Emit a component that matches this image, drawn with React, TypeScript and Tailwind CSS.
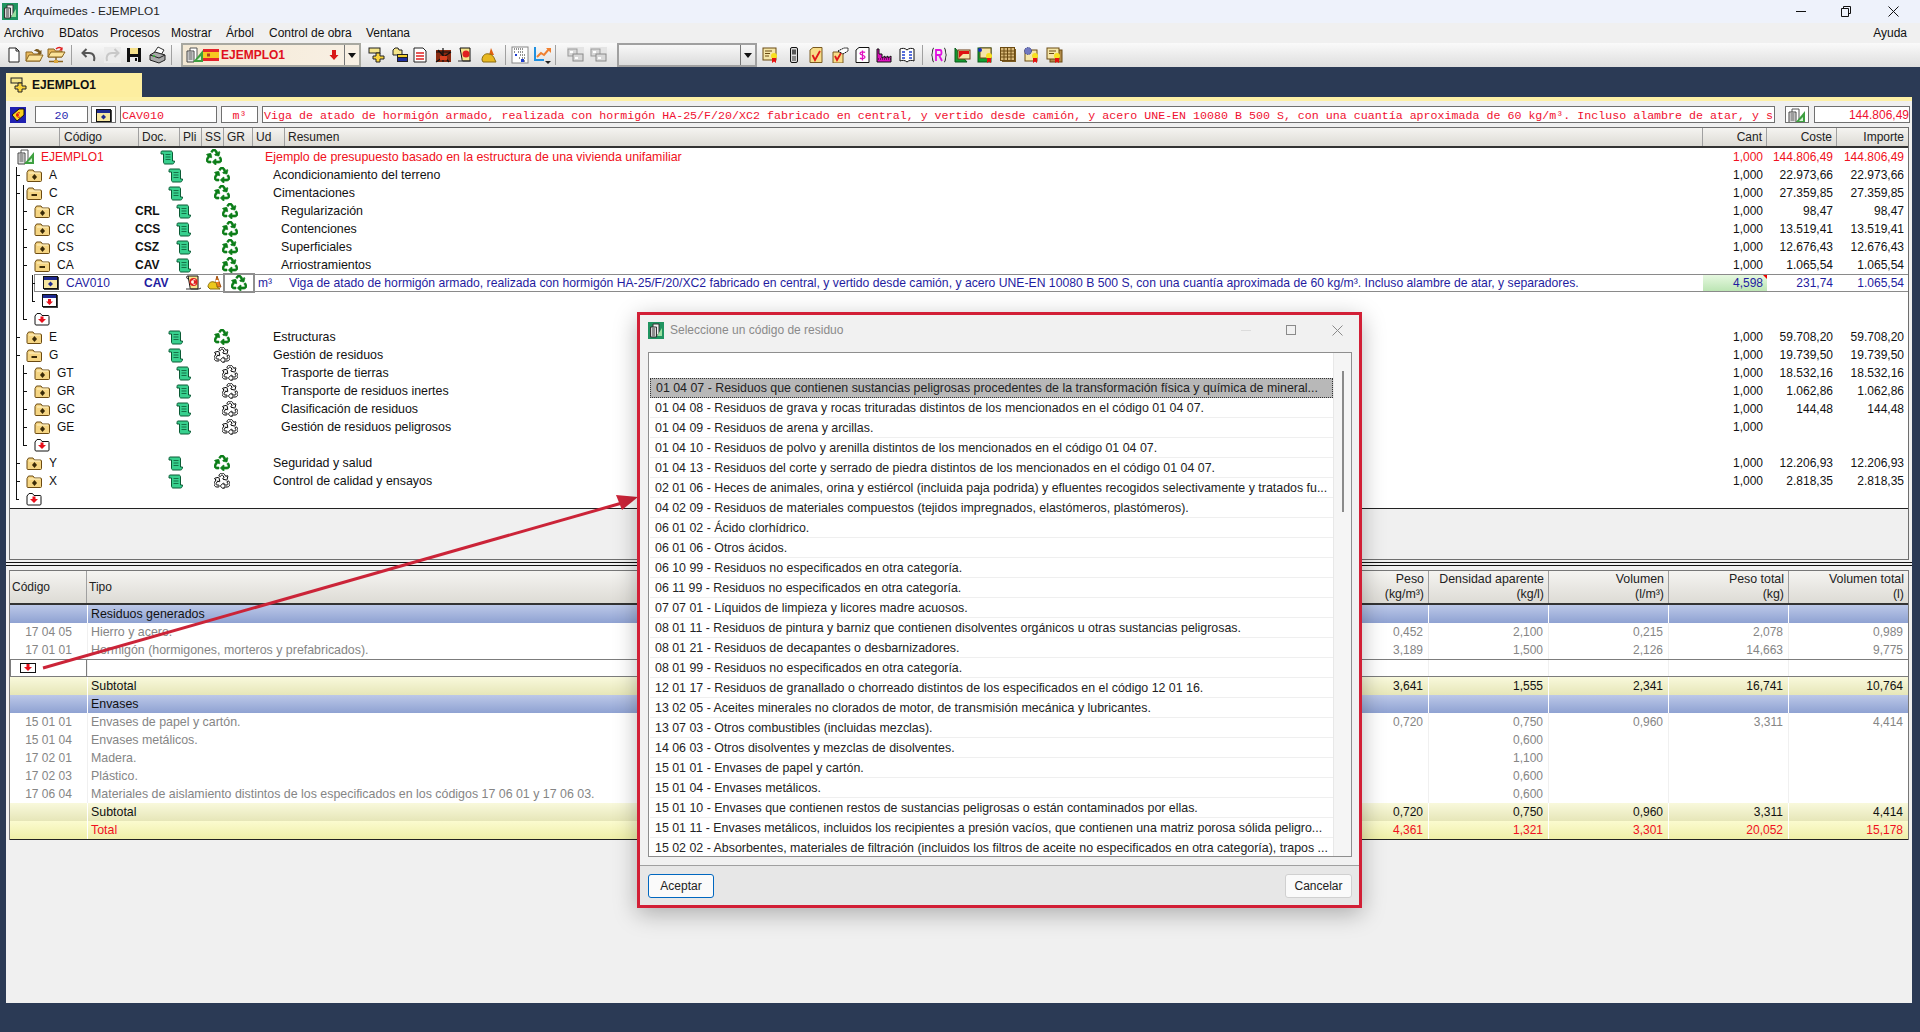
import React from "react";
import { FaRecycle } from "react-icons/fa";

type P = { children?: React.ReactNode; w?: number; h?: number };
const S = ({ children, w = 16, h = 16 }: P) => (
  <svg width={w} height={h} viewBox={`0 0 ${w} ${h}`} className="shrink-0">
    {children}
  </svg>
);

const Scroll = () => (
  <S w={16} h={15}>
    <path d="M2 1h9c1 0 1.500 1 1.500 2v8h2c0 2-1 3-2 3H5c-1 0-1.500-1-1.500-2V4H1c0-2 0-3 1-3z" fill="#38d08e" stroke="#0b5b35" />
    <path d="M5.500 4.500h5M5.500 7h5M5.500 9.500h5" stroke="#0b5b35" strokeWidth="0.800" />
  </S>
);
const Recycle = ({ outline }: { outline?: boolean }) =>
  outline ? (
    <FaRecycle size={16} color="#ffffff" stroke="#000000" strokeWidth={32} className="shrink-0" />
  ) : (
    <FaRecycle size={16} color="#0b7d18" stroke="#0b7d18" strokeWidth={22} className="shrink-0" />
  );
const Folder = ({ minus }: { minus?: boolean }) => (
  <S w={16} h={14}>
    <path d="M1 4.500 2.500 2h4.500L8.500 4H14.500c.7 0 1 .5 1 1v7.500c0 .7-.5 1-1 1H2c-.7 0-1-.4-1-1z" fill="#f5d583" stroke="#6b4a12" />
    <path d="M3 5h11" stroke="#fff3c8" />
    {minus ? <path d="M5.500 9h5.500" stroke="#3a2a08" strokeWidth="2" /> : <path d="M8.500 6 11 9 8.500 12 6 9z" fill="#3a2a08" />}
  </S>
);
const Win = ({ add }: { add?: boolean }) => (
  <S w={16} h={14}>
    <rect x="1" y="1" width="15" height="13" fill="#444" />
    <rect x="0.500" y="0.500" width="14" height="12" fill={add ? "#ffffff" : "#f6e6a0"} stroke="#111" />
    <rect x="1" y="1" width="13" height="3" fill="#1f2a90" />
    {add ? <path d="M6 5h3v2.500h2L7.500 11 4 7.500h2z" fill="#e8101c" /> : <path d="M7.500 5.500 10 8 7.500 10.500 5 8z" fill="#1f2a90" />}
  </S>
);
const AddFolder = () => (
  <S w={16} h={14}>
    <path d="M1 4 3 1.500h3.500L8 3.500h6.500c.5 0 .5.500.5 1v7.500c0 .5-.5 1-1 1H2c-.5 0-1-.5-1-1z" fill="#fff" stroke="#111" />
    <path d="M6.500 4.500h3V7H12l-4 4-4-4h2.500z" fill="#e8101c" />
  </S>
);
const Calc = () => (
  <S w={18} h={16}>
    <path d="M4 1h7v13H4z" fill="#fff" stroke="#555" />
    <path d="M1 4h7v11H1z" fill="#e4e4e4" stroke="#444" />
    <path d="M2.500 6h4M2.500 8h4M2.500 10h4M2.500 12h4" stroke="#555" />
    <path d="M17 3v12H7z" fill="#3ea040" />
    <path d="M15 9v4h-4z" fill="#d8f0d8" />
  </S>
);
const Euro = () => (
  <S w={17} h={16}>
    <path d="M3 1h10v13H6c-1 0-1-1-1-2z" fill="#f6e48c" stroke="#111" />
    <path d="M1 14h13l2-1" stroke="#333" fill="none" />
    <circle cx="8.500" cy="7" r="4" fill="#e02020" />
    <path d="M10.500 5c-2-1-3 0-3 2s1 3 3 2M6 6.300h3M6 7.700h3" stroke="#ffe" fill="none" />
    <path d="M3 1c-2 0-2 2 0 3" stroke="#111" fill="none" />
  </S>
);
const Cone = () => (
  <S w={17} h={16}>
    <path d="M10 1 14 12h-7z" fill="#f08020" stroke="#a05010" />
    <path d="M8.500 6h3" stroke="#fff" strokeWidth="2" />
    <path d="M1 12c0-4 3-6 6-5 2 0 3 2 3 5l3 2H3z" fill="#ecc81c" stroke="#8a7010" />
  </S>
);

// toolbar icons
const INew = () => (
  <S>
    <path d="M3 1h7l3 3v11H3z" fill="#fff" stroke="#222" />
    <path d="M10 1v3h3" fill="none" stroke="#222" />
  </S>
);
const IOpen = () => (
  <S w={19}>
    <path d="M1 14V5h6l1.500 2H15v7z" fill="#e8b85a" stroke="#8a6420" />
    <path d="M1 14 4 8h14l-3 6z" fill="#fbe39a" stroke="#8a6420" />
    <path d="M9 4c2-3 5-2 6 0l1.500-1v4H12l1.500-1c-1-1.500-3-2-4.500-2z" fill="#7a5a20" />
  </S>
);
const INet = () => (
  <S w={20} h={18}>
    <path d="M2 11V3h6l1.500 2H16v6z" fill="#e8b85a" stroke="#8a6420" />
    <path d="M2 11 5 6h14l-3 5z" fill="#fbe39a" stroke="#8a6420" />
    <path d="M10 3c2-2 5-2 6 0" stroke="#e02020" fill="none" strokeWidth="1.500" />
    <path d="M16.500 1v3.500H13z" fill="#e02020" />
    <path d="M10 11v4M3 15.500h14" stroke="#8a6420" strokeWidth="1.500" />
    <rect x="8" y="14" width="4" height="3" fill="#d9a63e" />
  </S>
);
const IUndo = () => (
  <S w={17}>
    <path d="M14 14c1-4 0-8-5-8H3M6.500 2 2.500 6l4 4" fill="none" stroke="#555" strokeWidth="2" />
  </S>
);
const IRedo = () => (
  <S w={17}>
    <rect width="17" height="16" fill="#ececec" />
    <path d="M3 14c-1-4 0-8 5-8h6M10.500 2l4 4-4 4" fill="none" stroke="#c8c8c8" strokeWidth="2" />
  </S>
);
const ISave = () => (
  <S>
    <rect x="1" y="1" width="14" height="14" fill="#111" />
    <rect x="4" y="1" width="8" height="6" fill="#f5e08a" />
    <rect x="4" y="10" width="8" height="5" fill="#e8e8e8" />
    <rect x="9" y="11" width="2" height="3" fill="#111" />
  </S>
);
const IPrint = () => (
  <S w={19} h={18}>
    <path d="M6 7 10 1l6 3-3 5z" fill="#fff" stroke="#333" />
    <path d="M2 9l5-3 10 3v5l-6 3-9-3z" fill="#a8a8a8" stroke="#222" />
    <path d="M2 9l9 3 6-3" fill="none" stroke="#222" />
    <circle cx="6" cy="10" r="1" fill="#30c030" />
  </S>
);
const INode = () => (
  <S w={18}>
    <rect x="1" y="1" width="11" height="5" fill="#f5e58a" stroke="#222" />
    <path d="M8 6h4v3h4v3h-4v3H8v-3H5V9h3z" fill="#f9d33a" stroke="#222" />
  </S>
);
const IBooks = () => (
  <S w={17}>
    <path d="M1 3 3 1h3l1 2h3v5H1z" fill="#f5e58a" stroke="#222" />
    <rect x="5.500" y="7.500" width="10" height="3" fill="#f3d030" stroke="#222" />
    <rect x="5.500" y="10.500" width="10" height="4" fill="#1e2ea0" stroke="#222" />
  </S>
);
const IDoc = () => (
  <S w={16}>
    <path d="M2 1h9l3 3v11H2z" fill="#fff" stroke="#222" />
    <path d="M4 6h8M4 9h8M4 12h8" stroke="#e02020" strokeWidth="1.500" />
  </S>
);
const ICrane = () => (
  <S w={17}>
    <rect x="1" y="3" width="15" height="12" fill="#8a2a10" />
    <path d="M1 15 16 5M3 3l11 12M8 1v14M1 5h15" stroke="#111" strokeWidth="1.200" />
    <rect x="5" y="9" width="7" height="4" fill="#d84020" />
  </S>
);
const IScrollE = () => (
  <S w={17}>
    <path d="M3 1h10v13H6c-1 0-1-1-1-2z" fill="#f6e48c" stroke="#111" />
    <circle cx="9" cy="7" r="3.500" fill="#e02020" />
    <path d="M1 14h13" stroke="#333" />
  </S>
);
const IHelmet = () => (
  <S w={17}>
    <path d="M10 1l3 7h-5z" fill="#e06010" />
    <path d="M1 13c0-5 4-7 7-6 3 0 5 3 6 6l1 2H2z" fill="#e8b820" stroke="#8a6a10" />
  </S>
);
const ITree = () => (
  <S w={18} h={18}>
    <rect x="1" y="1" width="16" height="16" fill="#fff" stroke="#888" />
    <path d="M3 3h9M3 6h2M7 6h6M5 9h2M9 9h6M8 12h2M11 12h3M11 15h4" stroke="#222" strokeDasharray="1 1" />
    <rect x="10" y="13" width="3" height="3" fill="#1e3ed0" />
    <rect x="4" y="8" width="2" height="2" fill="#1e3ed0" />
  </S>
);
const IChart = () => (
  <S w={19} h={18}>
    <path d="M2 1v13h9" fill="none" stroke="#2090e0" strokeWidth="2" />
    <path d="M4 11l4-4 3 2 5-6" fill="none" stroke="#f08030" strokeWidth="2" />
    <path d="M13 2h5v5z" fill="#f08030" />
    <path d="M12 15h6l-3 3z" fill="#222" />
  </S>
);
const IWin2 = () => (
  <S w={17}>
    <rect width="17" height="16" fill="#e4e4e4" />
    <rect x="1" y="2" width="9" height="7" fill="#d8d8d8" stroke="#9a9a9a" />
    <rect x="6" y="7" width="10" height="7" fill="#d8d8d8" stroke="#8a8a8a" />
    <path d="M3 5h3M8 11h3" stroke="#fff" strokeWidth="2" />
  </S>
);
const ICert = () => (
  <S w={17}>
    <rect x="1" y="1" width="13" height="12" fill="#f5e6a8" stroke="#6b4a12" />
    <path d="M3 4h7M3 6.500h5M3 9h4" stroke="#6b4a12" />
    <circle cx="12" cy="9" r="3" fill="#f7e020" />
    <path d="M10 11v5l2-1.500 2 1.500v-5" fill="#e81010" />
  </S>
);
const IPhone = () => (
  <S w={10}>
    <rect x="1.500" y="0.500" width="7" height="15" rx="1.500" fill="#ddd" stroke="#111" />
    <rect x="3" y="2.500" width="4" height="5" fill="#555" />
    <rect x="3" y="9" width="4" height="5" fill="#888" />
  </S>
);
const ICheck = () => (
  <S w={14}>
    <path d="M1 3 4 .5h9v15H1z" fill="#f7dc88" stroke="#7a5a20" />
    <path d="M3.500 8 6 13 11 4" fill="none" stroke="#e01818" strokeWidth="1.800" />
  </S>
);
const ICheckHand = () => (
  <S w={17}>
    <path d="M1 5h10v11H1z" fill="#f7dc88" stroke="#7a5a20" />
    <path d="M3 9l2 4 4-7" fill="none" stroke="#e01818" strokeWidth="1.800" />
    <path d="M6 4 12 1h4v3l-5 3z" fill="#fff" stroke="#111" strokeDasharray="1.500 .5" />
  </S>
);
const IDollar = () => (
  <S w={15}>
    <path d="M1 3 4 .5h10v15H1z" fill="#fff" stroke="#111" />
    <path d="M10 5.500C9 4.500 5 4.500 5 6.500s5 1.500 5 3.500-4 2-5 1M7.500 3.500v10" fill="none" stroke="#e010c0" strokeWidth="1.300" />
  </S>
);
const IFactory = () => (
  <S w={16}>
    <path d="M1 2v13h14V9l-3 2V9l-3 2V9l-3 2V7H3V2z" fill="#e010c0" stroke="#111" />
    <path d="M2 12h13" stroke="#111" strokeDasharray="1 1" />
  </S>
);
const IBook = () => (
  <S w={16}>
    <path d="M1 2c2-1 5-1 7 1 2-2 5-2 7-1v12c-2-1-5-1-7 1-2-2-5-2-7-1z" fill="#fff" stroke="#111" />
    <path d="M3 5h3M3 8h3M3 11h3M10 5h3M10 8h3M10 11h3" stroke="#2040d0" strokeWidth="1.300" />
  </S>
);
const IBrace = () => (
  <S w={16}>
    <path d="M3 1C1 1 2 7 .5 8 2 9 1 15 3 15M13 1c2 0 1 6 2.500 7-1.500 1-.5 7-2.500 7" fill="none" stroke="#222" />
    <path d="M5 14V3h4c2 0 2 5 0 5H5M8 8l3 6" fill="none" stroke="#e010e0" strokeWidth="1.800" />
  </S>
);
const IGreenFlag = () => (
  <S w={17}>
    <path d="M1 1v14h12z" fill="#119a30" stroke="#0a5a1a" />
    <rect x="4" y="3" width="12" height="9" fill="#f5e6a8" stroke="#6b3a12" />
    <path d="M5 4h10v3H9l-4 4z" fill="#e01010" />
  </S>
);
const ICertGreen = () => (
  <S w={17}>
    <rect x="1" y="1" width="13" height="14" fill="#10a030" stroke="#0a5a1a" />
    <rect x="3" y="1" width="11" height="10" fill="#f5e6a8" stroke="#6b4a12" />
    <circle cx="3" cy="3" r="2" fill="#1830c0" />
    <circle cx="12" cy="9" r="3" fill="#f7e020" />
    <path d="M10 11v5l2-1.500 2 1.500v-5" fill="#e81010" />
  </S>
);
const IGrid = () => (
  <S w={17}>
    <rect x="2" y="2" width="14" height="13" fill="#7a5a20" />
    <rect x="0.500" y="0.500" width="14" height="13" fill="#d8b878" stroke="#6b4a12" />
    <path d="M4 1v12M7.500 1v12M11 1v12M1 4h13M1 7h13M1 10h13" stroke="#6b4a12" />
  </S>
);
const IGearCert = () => (
  <S w={17}>
    <rect x="2" y="3" width="12" height="11" fill="#f5e6a8" stroke="#6b4a12" />
    <circle cx="5" cy="4" r="3.500" fill="#7078c0" stroke="#40488a" strokeDasharray="1.500 1" />
    <circle cx="12" cy="9" r="3" fill="#f7e020" />
    <path d="M10 11v5l2-1.500 2 1.500v-5" fill="#e81010" />
  </S>
);
const ICertStack = () => (
  <S w={17}>
    <rect x="4" y="3" width="12" height="12" fill="#b08a48" stroke="#6b4a12" />
    <rect x="1" y="1" width="12" height="11" fill="#f5e6a8" stroke="#6b4a12" />
    <path d="M3 4h7M3 6.500h5" stroke="#6b4a12" />
    <circle cx="11" cy="9" r="3" fill="#f7e020" />
    <path d="M9 11v5l2-1.500 2 1.500v-5" fill="#e81010" />
  </S>
);
const Flag = () => (
  <S w={16} h={12}>
    <rect width="16" height="12" fill="#e4242c" />
    <rect y="3" width="16" height="6" fill="#f7c820" />
    <rect x="4" y="4.500" width="3" height="3" fill="#b04020" />
  </S>
);
const DownRed = () => (
  <S w={10} h={12}>
    <path d="M3 1h4v5h2.500L5 11 .5 6H3z" fill="#d81818" />
  </S>
);

const AppIcon = () => (
  <S w={16} h={17}>
    <rect width="16" height="17" fill="#1f9460" />
    <path d="M5 2h6v11H5z" fill="#f0f0f0" stroke="#333" />
    <path d="M2.500 5h6v10h-6z" fill="#d8d8d8" stroke="#333" />
    <path d="M4 7h3M4 9h3M4 11h3M4 13h3" stroke="#444" />
    <path d="M14 6v8H9z" fill="#9adfa0" />
  </S>
);

const Sep = ({ ml }: { ml: string }) => <div className={`h-[20px] w-px bg-[#a0a0a0] shrink-0 ${ml}`} />;
const TI = ({ children, ml = "" }: { children: React.ReactNode; ml?: string }) => (
  <div className={`w-[20px] h-[20px] flex items-center justify-center shrink-0 ${ml}`}>{children}</div>
);
const Caret = () => (
  <div className="flex items-center">
    <div className="h-[20px] w-px bg-[#777]" />
    <div className="ml-[3px] w-0 h-0 border-x-[4px] border-x-transparent border-t-[5px] border-t-[#111]" />
  </div>
);

const TitleBar = () => (
  <div className="h-[23px] bg-[#eef2fb] flex items-center shrink-0">
    <div className="ml-[2px]"><AppIcon /></div>
    <span className="ml-[6px] mt-[1px] text-[11.800px] text-[#222]">Arquímedes - EJEMPLO1</span>
    <div className="ml-auto flex items-center">
      <div className="w-[10px] h-px bg-[#111] mr-[35px]" />
      <svg width="10" height="11" viewBox="0 0 10 11" className="mr-[37px]">
        <path d="M.5 2.500h7v8h-7zM2.500 2.500v-2h7v7H7.500" fill="none" stroke="#111" />
      </svg>
      <svg width="11" height="11" viewBox="0 0 11 11" className="mr-[21px]">
        <path d="M.5.500l10 10M10.500.500l-10 10" stroke="#111" />
      </svg>
    </div>
  </div>
);

const menus: [string, string][] = [
  ["Archivo", "w-[55px]"],
  ["BDatos", "w-[51px]"],
  ["Procesos", "w-[61px]"],
  ["Mostrar", "w-[55px]"],
  ["Árbol", "w-[43px]"],
  ["Control de obra", "w-[97px]"],
  ["Ventana", "w-[45px]"],
];
const MenuBar = () => (
  <div className="h-[20px] bg-[#f0f0f0] flex items-center text-[12px] text-[#111] shrink-0 pl-[4px]">
    {menus.map(([m, w]) => (
      <span key={m} className={`${w} shrink-0`}>
        {m}
      </span>
    ))}
    <span className="ml-auto mr-[13px]">Ayuda</span>
  </div>
);

const Toolbar = () => (
  <div className="h-[24px] shrink-0 flex items-center bg-linear-to-b from-[#fafafa] to-[#dedede] pl-[4px]">
    <TI><INew /></TI>
    <TI><IOpen /></TI>
    <TI ml="ml-[2px]"><INet /></TI>
    <Sep ml="ml-[5px]" />
    <TI ml="ml-[6px]"><IUndo /></TI>
    <TI ml="ml-[4px]"><IRedo /></TI>
    <TI ml="ml-[2px]"><ISave /></TI>
    <TI ml="ml-[3px]"><IPrint /></TI>
    <Sep ml="ml-[4px]" />
    <div className="ml-[9px] w-[180px] h-[24px] border-2 border-[#a8a8a0] bg-linear-to-r from-[#f4e9d4] to-[#f8f0e4] flex items-center pl-[3px] shrink-0">
      <Calc />
      <div className="ml-[-1px]"><Flag /></div>
      <span className="ml-[2px] text-[12px] font-bold text-[#e01020]">EJEMPLO1</span>
      <div className="ml-auto mr-[5px]"><DownRed /></div>
      <Caret />
      <div className="w-[3px]" />
    </div>
    <TI ml="ml-[6px]"><INode /></TI>
    <TI ml="ml-[3px]"><IBooks /></TI>
    <TI><IDoc /></TI>
    <TI ml="ml-[3px]"><ICrane /></TI>
    <TI ml="ml-[2px]"><IScrollE /></TI>
    <TI ml="ml-[4px]"><IHelmet /></TI>
    <Sep ml="ml-[6px]" />
    <TI ml="ml-[4px]"><ITree /></TI>
    <TI ml="ml-[2px]"><IChart /></TI>
    <Sep ml="ml-[3px]" />
    <TI ml="ml-[9px]"><IWin2 /></TI>
    <TI ml="ml-[3px]"><IWin2 /></TI>
    <div className="ml-[9px] w-[140px] h-[24px] border-2 border-[#a0a0a0] bg-linear-to-b from-[#f8f8f8] to-[#dcdcdc] flex items-center justify-end pr-[2px] shrink-0">
      <Caret />
      <div className="w-[1px]" />
    </div>
    <TI ml="ml-[3px]"><ICert /></TI>
    <TI ml="ml-[4px]"><IPhone /></TI>
    <TI ml="ml-[2px]"><ICheck /></TI>
    <TI ml="ml-[4px]"><ICheckHand /></TI>
    <TI ml="ml-[2px]"><IDollar /></TI>
    <TI ml="ml-[2px]"><IFactory /></TI>
    <TI ml="ml-[3px]"><IBook /></TI>
    <Sep ml="ml-[5px]" />
    <TI ml="ml-[6px]"><IBrace /></TI>
    <TI ml="ml-[3px]"><IGreenFlag /></TI>
    <TI ml="ml-[3px]"><ICertGreen /></TI>
    <TI ml="ml-[3px]"><IGrid /></TI>
    <TI ml="ml-[3px]"><IGearCert /></TI>
    <TI ml="ml-[3px]"><ICertStack /></TI>
  </div>
);

const inputCls =
  "h-[17px] border border-[#707070] bg-white flex items-center shrink-0 overflow-hidden font-['Liberation_Mono',monospace] text-[11.650px] leading-none whitespace-nowrap pt-[2px]";
const InputRow = () => (
  <div className="h-[17px] flex items-center pl-[4px] shrink-0 mt-[5px]">
    <div className="w-[16px] h-[16px] bg-[#2020b0] flex items-center justify-center shrink-0">
      <svg width="14" height="14" viewBox="0 0 14 14">
        <path d="M1 7 8 1h5v6l-7 6z" fill="#f9d020" stroke="#111" />
        <path d="M9 5c-2-1-3 0-3 2s1 3 3 2M5 6.300h3M5 7.700h3" fill="none" stroke="#e01010" />
      </svg>
    </div>
    <div className={`${inputCls} ml-[9px] w-[53px] justify-center text-[#2a2ab0]`}>20</div>
    <div className={`${inputCls} ml-[3px] w-[25px] justify-center pt-0`}><Win /></div>
    <div className={`${inputCls} ml-[4px] w-[97px] pl-[1px] text-[#f01030]`}>CAV010</div>
    <div className={`${inputCls} ml-[4px] w-[37px] justify-center text-[#f01030]`}>m³</div>
    <div className={`${inputCls} ml-[4px] w-[1513px] pl-[1px] text-[#f01030]`}>
      Viga de atado de hormigón armado, realizada con hormigón HA-25/F/20/XC2 fabricado en central, y vertido desde camión, y acero UNE-EN 10080 B 500 S, con una cuantía aproximada de 60 kg/m³. Incluso alambre de atar, y s
    </div>
    <div className={`${inputCls} ml-[10px] w-[24px] justify-center pt-0`}><Calc /></div>
    <div className="h-[17px] ml-[5px] w-[96px] border border-[#707070] bg-white flex items-center justify-end text-[12px] text-[#f01030] shrink-0">144.806,49</div>
  </div>
);

const headCell = "h-full flex items-center border-r border-[#a0a0a0] shrink-0 text-[12px] text-[#222]";
const TreeHeader = () => (
  <div className="h-[20px] flex bg-linear-to-b from-[#f5f4f1] to-[#dddbd5] border-b-2 border-[#333] shrink-0">
    <div className={`${headCell} w-[50px]`} />
    <div className={`${headCell} w-[79px] pl-[4px]`}>Código</div>
    <div className={`${headCell} w-[41px] pl-[3px]`}>Doc.</div>
    <div className={`${headCell} w-[22px] pl-[3px]`}>Pli</div>
    <div className={`${headCell} w-[22px] pl-[3px]`}>SS</div>
    <div className={`${headCell} w-[29px] pl-[3px]`}>GR</div>
    <div className={`${headCell} w-[32px] pl-[3px]`}>Ud</div>
    <div className={`${headCell} flex-1 pl-[3px] text-[12.400px]`}>Resumen</div>
    <div className={`${headCell} w-[64px] justify-end pr-[4px]`}>Cant</div>
    <div className={`${headCell} w-[70px] justify-end pr-[4px]`}>Coste</div>
    <div className={`${headCell} w-[71px] justify-end pr-[4px] border-r-0`}>Importe</div>
  </div>
);

type TR = {
  lvl: number;
  icon: "calc" | "plus" | "minus" | "win" | "addwin" | "addfolder";
  code?: string;
  code2?: string;
  res?: string;
  outline?: boolean;
  coste?: string;
  cant?: string;
  importe?: string;
  red?: boolean;
  sel?: boolean;
};

const treeRows: TR[] = [
  { lvl: 0, icon: "calc", code: "EJEMPLO1", res: "Ejemplo de presupuesto basado en la estructura de una vivienda unifamiliar", cant: "1,000", coste: "144.806,49", importe: "144.806,49", red: true },
  { lvl: 1, icon: "plus", code: "A", res: "Acondicionamiento del terreno", cant: "1,000", coste: "22.973,66", importe: "22.973,66" },
  { lvl: 1, icon: "minus", code: "C", res: "Cimentaciones", cant: "1,000", coste: "27.359,85", importe: "27.359,85" },
  { lvl: 2, icon: "plus", code: "CR", code2: "CRL", res: "Regularización", cant: "1,000", coste: "98,47", importe: "98,47" },
  { lvl: 2, icon: "plus", code: "CC", code2: "CCS", res: "Contenciones", cant: "1,000", coste: "13.519,41", importe: "13.519,41" },
  { lvl: 2, icon: "plus", code: "CS", code2: "CSZ", res: "Superficiales", cant: "1,000", coste: "12.676,43", importe: "12.676,43" },
  { lvl: 2, icon: "minus", code: "CA", code2: "CAV", res: "Arriostramientos", cant: "1,000", coste: "1.065,54", importe: "1.065,54" },
  { lvl: 3, icon: "win", sel: true, code: "CAV010", code2: "CAV", res: "Viga de atado de hormigón armado, realizada con hormigón HA-25/F/20/XC2 fabricado en central, y vertido desde camión, y acero UNE-EN 10080 B 500 S, con una cuantía aproximada de 60 kg/m³. Incluso alambre de atar, y separadores.", cant: "4,598", coste: "231,74", importe: "1.065,54" },
  { lvl: 3, icon: "addwin" },
  { lvl: 2, icon: "addfolder" },
  { lvl: 1, icon: "plus", code: "E", res: "Estructuras", cant: "1,000", coste: "59.708,20", importe: "59.708,20" },
  { lvl: 1, icon: "minus", code: "G", res: "Gestión de residuos", outline: true, cant: "1,000", coste: "19.739,50", importe: "19.739,50" },
  { lvl: 2, icon: "plus", code: "GT", res: "Trasporte de tierras", outline: true, cant: "1,000", coste: "18.532,16", importe: "18.532,16" },
  { lvl: 2, icon: "plus", code: "GR", res: "Transporte de residuos inertes", outline: true, cant: "1,000", coste: "1.062,86", importe: "1.062,86" },
  { lvl: 2, icon: "plus", code: "GC", res: "Clasificación de residuos", outline: true, cant: "1,000", coste: "144,48", importe: "144,48" },
  { lvl: 2, icon: "plus", code: "GE", res: "Gestión de residuos peligrosos", outline: true, cant: "1,000" },
  { lvl: 2, icon: "addfolder" },
  { lvl: 1, icon: "plus", code: "Y", res: "Seguridad y salud", cant: "1,000", coste: "12.206,93", importe: "12.206,93" },
  { lvl: 1, icon: "plus", code: "X", res: "Control de calidad y ensayos", outline: true, cant: "1,000", coste: "2.818,35", importe: "2.818,35" },
  { lvl: 1, icon: "addfolder" },
];

const RowIcon = ({ k }: { k: TR["icon"] }) => {
  if (k === "calc") return <Calc />;
  if (k === "plus") return <Folder />;
  if (k === "minus") return <Folder minus />;
  if (k === "win") return <Win />;
  if (k === "addwin") return <Win add />;
  return <AddFolder />;
};

const TreeRow = ({ r }: { r: TR }) => {
  const tone = r.red ? "text-[#f01020]" : r.sel ? "text-[#1f1ca0]" : "text-[#111]";
  const showData = !!r.code;
  return (
    <div className={`h-[18px] flex items-stretch text-[12px] whitespace-nowrap ${tone}`} style={{ paddingLeft: r.lvl * 8 }}>
      <div className={`flex-1 min-w-0 flex items-center pl-[8px] ${r.sel ? "border-y border-l border-[#8a8a8a] pl-[7px]" : ""}`}>
        <div className="w-[16px] flex justify-center shrink-0">
          <RowIcon k={r.icon} />
        </div>
        {showData && (
          <>
            <div className="w-[78px] ml-[7px] shrink-0">{r.code}</div>
            <div className="w-[41px] shrink-0 font-bold">{r.code2}</div>
            <div className="w-[46px] shrink-0 flex items-center">
              {r.sel ? (
                <>
                  <Euro />
                  <div className="ml-[5px]"><Cone /></div>
                </>
              ) : (
                <Scroll />
              )}
            </div>
            <div className="w-[58px] shrink-0 flex items-center relative">
              {r.sel ? (
                <>
                  <div className="ml-[-8px] w-[32px] h-[20px] border-2 border-[#8f8f8f] bg-white flex items-center justify-center shrink-0">
                    <Recycle />
                  </div>
                  <span className="ml-[3px]">m³</span>
                </>
              ) : (
                <Recycle outline={r.outline} />
              )}
            </div>
            <div className={`flex-1 min-w-0 overflow-hidden ${r.sel ? "text-[12.200px]" : "text-[12.400px] pl-[1px]"}`}>{r.res}</div>
            <div className={`relative h-full w-[64px] shrink-0 flex items-center justify-end pr-[4px] ${r.sel ? "bg-linear-to-b from-[#e6f8e0] to-[#bce5b4]" : ""}`}>
              {r.cant}
              {r.sel && <div className="absolute right-0 top-0 w-0 h-0 border-l-[4px] border-l-transparent border-t-[4px] border-t-[#f00000]" />}
            </div>
            <div className="w-[70px] shrink-0 text-right pr-[4px]">{r.coste}</div>
            <div className="w-[71px] shrink-0 text-right pr-[4px]">{r.importe}</div>
          </>
        )}
      </div>
    </div>
  );
};

const TreeLines = () => (
  <svg className="absolute left-0 top-0 pointer-events-none" width="60" height="360" viewBox="0 0 60 360">
    <g stroke="#111" shapeRendering="crispEdges" fill="none">
      <path d="M6.500 19V351H9" />
      <path d="M6 27h4M6 45h4M6 189h4M6 207h4M6 315h4M6 333h4" />
      <path d="M13.500 37V171H17M13 63h4M13 81h4M13 99h4M13 117h4" />
      <path d="M13.500 217V297H17M13 225h4M13 243h4M13 261h4M13 279h4" />
      <path d="M22.500 127V153H25M22 135h3" />
    </g>
  </svg>
);

const TreePanel = () => (
  <div className="mt-[4px] mx-[3px] h-[433px] border border-[#6e6e6e] flex flex-col shrink-0">
    <TreeHeader />
    <div className="relative h-[360px] bg-white border-b border-[#222] shrink-0 box-content">
      {treeRows.map((r, i) => (
        <TreeRow key={i} r={r} />
      ))}
      <TreeLines />
    </div>
  </div>
);

type BR = { t: "sec" | "item" | "new" | "sub" | "total"; c?: string; d?: string; v?: string[] };
const botRows: BR[] = [
  { t: "sec", d: "Residuos generados" },
  { t: "item", c: "17 04 05", d: "Hierro y acero.", v: ["0,452", "2,100", "0,215", "2,078", "0,989"] },
  { t: "item", c: "17 01 01", d: "Hormigón (hormigones, morteros y prefabricados).", v: ["3,189", "1,500", "2,126", "14,663", "9,775"] },
  { t: "new" },
  { t: "sub", d: "Subtotal", v: ["3,641", "1,555", "2,341", "16,741", "10,764"] },
  { t: "sec", d: "Envases" },
  { t: "item", c: "15 01 01", d: "Envases de papel y cartón.", v: ["0,720", "0,750", "0,960", "3,311", "4,414"] },
  { t: "item", c: "15 01 04", d: "Envases metálicos.", v: ["", "0,600", "", "", ""] },
  { t: "item", c: "17 02 01", d: "Madera.", v: ["", "1,100", "", "", ""] },
  { t: "item", c: "17 02 03", d: "Plástico.", v: ["", "0,600", "", "", ""] },
  { t: "item", c: "17 06 04", d: "Materiales de aislamiento distintos de los especificados en los códigos 17 06 01 y 17 06 03.", v: ["", "0,600", "", "", ""] },
  { t: "sub", d: "Subtotal", v: ["0,720", "0,750", "0,960", "3,311", "4,414"] },
  { t: "total", d: "Total", v: ["4,361", "1,321", "3,301", "20,052", "15,178"] },
];

const rowStyle: Record<BR["t"], string> = {
  sec: "bg-linear-to-b from-[#bcc8e8] to-[#8fa2d2] text-[#111]",
  item: "bg-white text-[#858585]",
  new: "bg-white border-y border-[#7c7c7c]",
  sub: "bg-linear-to-b from-[#f9f9dc] to-[#e6e6b8] text-[#111]",
  total: "bg-linear-to-b from-[#fbfbcf] to-[#efefa8] text-[#f01020]",
};
const divider: Record<BR["t"], string> = {
  sec: "border-white",
  item: "border-[#f0f0f0]",
  new: "border-[#f0f0f0]",
  sub: "border-white",
  total: "border-white",
};

const BotRow = ({ r }: { r: BR }) => (
  <div className={`h-[18px] flex items-stretch text-[12px] whitespace-nowrap ${rowStyle[r.t]}`}>
    <div className={`w-[77px] shrink-0 flex items-center justify-center ${r.t === "new" ? "border-r border-l border-[#7c7c7c] justify-start pl-[9px]" : ""}`}>
      {r.t === "new" ? (
        <svg width="16" height="11" viewBox="0 0 16 11">
          <rect x="0.500" y="0.500" width="15" height="9" fill="#fff" stroke="#111" />
          <path d="M6.500 1h3v3H12l-4 4-4-4h2.500z" fill="#e8101c" />
        </svg>
      ) : (
        r.c
      )}
    </div>
    <div className={`flex-1 min-w-0 border-l ${divider[r.t]} pl-[3px] flex items-center text-[12.400px]`}>{r.d}</div>
    {[0, 1, 2, 3, 4].map((i) => (
      <div key={i} className={`w-[120px] shrink-0 border-l ${divider[r.t]} flex items-center justify-end pr-[5px]`}>
        {r.v ? r.v[i] : ""}
      </div>
    ))}
  </div>
);

const botHeads: [string, string][] = [
  ["Peso", "(kg/m³)"],
  ["Densidad aparente", "(kg/l)"],
  ["Volumen", "(l/m³)"],
  ["Peso total", "(kg)"],
  ["Volumen total", "(l)"],
];
const BottomPanel = () => (
  <div className="mt-[4px] mx-[3px] border-t border-x border-[#777] flex flex-col shrink-0">
    <div className="h-[34px] flex bg-linear-to-b from-[#f5f4f1] to-[#dddbd5] border-b-2 border-[#333] shrink-0 text-[12px] text-[#222]">
      <div className="w-[77px] border-r border-[#a0a0a0] flex items-center pl-[2px] shrink-0">Código</div>
      <div className="flex-1 flex items-center pl-[2px]">Tipo</div>
      {botHeads.map(([a, b]) => (
        <div key={a} className="w-[120px] shrink-0 border-l border-[#a0a0a0] flex flex-col items-end justify-center pr-[4px] leading-[15px] text-[12.400px]">
          <span>{a}</span>
          <span>{b}</span>
        </div>
      ))}
    </div>
    <div className="border-b border-[#222]">
      {botRows.map((r, i) => (
        <BotRow key={i} r={r} />
      ))}
    </div>
  </div>
);

const residuos = [
  "01 04 07 - Residuos que contienen sustancias peligrosas procedentes de la transformación física y química de mineral...",
  "01 04 08 - Residuos de grava y rocas trituradas distintos de los mencionados en el código 01 04 07.",
  "01 04 09 - Residuos de arena y arcillas.",
  "01 04 10 - Residuos de polvo y arenilla distintos de los mencionados en el código 01 04 07.",
  "01 04 13 - Residuos del corte y serrado de piedra distintos de los mencionados en el código 01 04 07.",
  "02 01 06 - Heces de animales, orina y estiércol (incluida paja podrida) y efluentes recogidos selectivamente y tratados fu...",
  "04 02 09 - Residuos de materiales compuestos (tejidos impregnados, elastómeros, plastómeros).",
  "06 01 02 - Ácido clorhídrico.",
  "06 01 06 - Otros ácidos.",
  "06 10 99 - Residuos no especificados en otra categoría.",
  "06 11 99 - Residuos no especificados en otra categoría.",
  "07 07 01 - Líquidos de limpieza y licores madre acuosos.",
  "08 01 11 - Residuos de pintura y barniz que contienen disolventes orgánicos u otras sustancias peligrosas.",
  "08 01 21 - Residuos de decapantes o desbarnizadores.",
  "08 01 99 - Residuos no especificados en otra categoría.",
  "12 01 17 - Residuos de granallado o chorreado distintos de los especificados en el código 12 01 16.",
  "13 02 05 - Aceites minerales no clorados de motor, de transmisión mecánica y lubricantes.",
  "13 07 03 - Otros combustibles (incluidas mezclas).",
  "14 06 03 - Otros disolventes y mezclas de disolventes.",
  "15 01 01 - Envases de papel y cartón.",
  "15 01 04 - Envases metálicos.",
  "15 01 10 - Envases que contienen restos de sustancias peligrosas o están contaminados por ellas.",
  "15 01 11 - Envases metálicos, incluidos los recipientes a presión vacíos, que contienen una matriz porosa sólida peligro...",
  "15 02 02 - Absorbentes, materiales de filtración (incluidos los filtros de aceite no especificados en otra categoría), trapos ...",
];

const Dialog = () => (
  <div className="absolute left-[637px] top-[312px] w-[725px] h-[596px] border-[3px] border-[#d21f36] bg-[#f1f1f1] shadow-[0_6px_22px_rgba(0,0,0,0.28)] flex flex-col text-[12.400px] text-[#222]">
    <div className="h-[30px] flex items-center shrink-0 pl-[8px]">
      <AppIcon />
      <span className="ml-[6px] mb-[1px] text-[#8a8a8a] text-[12px]">Seleccione un código de residuo</span>
      <div className="ml-auto flex items-center">
        <div className="w-[10px] h-px bg-[#dcdcdc] mr-[35px]" />
        <div className="w-[10px] h-[10px] border border-[#8a8a8a] mr-[36px]" />
        <svg width="11" height="11" viewBox="0 0 11 11" className="mr-[16px]">
          <path d="M.5.500l10 10M10.500.500l-10 10" stroke="#8a8a8a" />
        </svg>
      </div>
    </div>
    <div className="mt-[7px] ml-[8px] mr-[7px] h-[505px] border border-[#8e8e8e] bg-white flex shrink-0 overflow-hidden">
      <div className="flex-1 min-w-0 pt-[25px] pl-[1px]">
        {residuos.map((t, i) => (
          <div
            key={t}
            className={`h-[20px] flex items-center pl-[5px] whitespace-nowrap overflow-hidden ${
              i === 0 ? "bg-[#b8b8b8] border border-dotted border-[#333]" : "border-b border-[#efefef] pt-[1px]"
            }`}
          >
            {t}
          </div>
        ))}
      </div>
      <div className="w-[18px] shrink-0 bg-[#f5f5f5] border-l border-[#e8e8e8] relative">
        <div className="absolute left-[8px] top-[18px] h-[141px] w-[2px] bg-[#8a8a8a]" />
      </div>
    </div>
    <div className="mt-[8px] flex-1 border-t border-[#a0a0a0] bg-[#e7e7e7] flex items-start justify-between pt-[8px] pl-[8px] pr-[7px]">
      <button className="w-[66px] h-[24px] rounded-[3px] border border-[#0067c0] bg-[#fafafa] text-[12px] text-[#222]">Aceptar</button>
      <button className="w-[67px] h-[24px] rounded-[3px] border border-[#d0d0d0] bg-[#fafafa] text-[12px] text-[#222]">Cancelar</button>
    </div>
  </div>
);

const Arrow = () => (
  <svg className="absolute left-0 top-0 pointer-events-none" width="1920" height="1032" viewBox="0 0 1920 1032">
    <line x1="43" y1="668" x2="622" y2="503" stroke="#cb2438" strokeWidth="3" />
    <polygon points="638,497 616,495 622,510" fill="#cb2438" />
  </svg>
);

export default function App() {
  return (
    <div className="relative w-[1920px] h-[1032px] overflow-hidden bg-[#2b3a55] flex flex-col font-['Liberation_Sans',Arial,sans-serif]">
      <TitleBar />
      <MenuBar />
      <Toolbar />
      <div className="flex-1 min-h-0 pt-[6px] pl-[6px] pr-[8px] pb-[29px] flex flex-col">
        <div className="w-[136px] h-[24px] bg-[#fdeea0] flex items-center pl-[4px] shrink-0">
          <INode />
          <span className="ml-[4px] text-[12px] font-bold text-[#111]">EJEMPLO1</span>
        </div>
        <div className="flex-1 min-h-0 bg-[#f0f0f0] border-t-[4px] border-[#fdf0a5] flex flex-col">
          <InputRow />
          <TreePanel />
          <div className="mt-[2px] h-[4px] border-y border-[#111] shrink-0" />
          <BottomPanel />
        </div>
      </div>
      <Arrow />
      <Dialog />
    </div>
  );
}
